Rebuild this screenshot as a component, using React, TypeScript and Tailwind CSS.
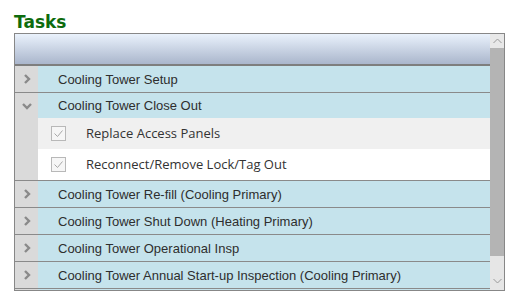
import React from "react"

const groups = [
  { name: "Cooling Tower Setup", open: false },
  { name: "Cooling Tower Close Out", open: true, items: ["Replace Access Panels", "Reconnect/Remove Lock/Tag Out"] },
  { name: "Cooling Tower Re-fill (Cooling Primary)", open: false },
  { name: "Cooling Tower Shut Down (Heating Primary)", open: false },
  { name: "Cooling Tower Operational Insp", open: false },
  { name: "Cooling Tower Annual Start-up Inspection (Cooling Primary)", open: false },
]

function Chevron({ open }: { open: boolean }) {
  return (
    <svg width="12" height="12" viewBox="0 0 12 12" className="block">
      {open ? (
        <polyline points="2,4 6,8 10,4" fill="none" stroke="#8a8a8a" strokeWidth="2.4" />
      ) : (
        <polyline points="4,2 8,6 4,10" fill="none" stroke="#8a8a8a" strokeWidth="2.4" />
      )}
    </svg>
  )
}

function Check() {
  return (
    <div className="w-[15px] h-[15px] border border-[#b8b8b8] bg-[#f6f6f6] flex items-center justify-center">
      <svg width="11" height="11" viewBox="0 0 11 11">
        <polyline points="1.5,5.5 4.5,8.5 9.5,2.5" fill="none" stroke="#a8a8a8" strokeWidth="1" />
      </svg>
    </div>
  )
}

export default function App() {
  return (
    <div className="w-[518px] h-[308px] bg-white pl-[14px] pt-[12px]">
      <h2 className="text-[17px] leading-[21px] font-bold text-[#0d6b0d] font-['DejaVu_Sans',sans-serif]">Tasks</h2>
      <div className="flex w-[491px] h-[258px] border border-[#878787] overflow-hidden">
        <div className="flex-1 flex flex-col overflow-hidden">
          {/* grid header */}
          <div className="h-[32px] shrink-0 border-b-2 border-[#7e7e7e] bg-gradient-to-b from-[#eaf2fc] to-[#aab6cc]"></div>

          {groups.map((g, i) => (
            <div key={i} className="shrink-0">
              <div
                className={`flex ${g.open ? "h-[25px]" : "h-[27px] border-b border-[#8a8a8a]"} bg-[#c5e3ec] text-[13px] text-[#2e2e2e] font-['Liberation_Sans',sans-serif]`}
              >
                <div className="w-[23px] shrink-0 bg-[#dadada] flex items-center justify-center">
                  <Chevron open={g.open} />
                </div>
                <div className="flex items-center pl-[20px] pt-px">{g.name}</div>
              </div>
              {g.items &&
                g.items.map((t, j) => (
                  <div
                    key={j}
                    className={`flex ${j === g.items!.length - 1 ? "h-[32px] border-b border-[#8a8a8a]" : "h-[31px]"} text-[13px] text-[#333333] font-['Open_Sans',sans-serif]`}
                  >
                    <div className="w-[23px] shrink-0 bg-[#dadada]"></div>
                    <div className={`flex-1 flex items-center pl-[13px] ${j % 2 === 0 ? "bg-[#f0f0f0]" : "bg-white"}`}>
                      <Check />
                      <span className="ml-[20px]">{t}</span>
                    </div>
                  </div>
                ))}
            </div>
          ))}
          {/* next row, cut off by the scroll area */}
          <div className="flex-1 flex">
            <div className="w-[23px] shrink-0 bg-[#dadada]"></div>
            <div className="flex-1 bg-[#c5e3ec]"></div>
          </div>
        </div>

        {/* scrollbar */}
        <div className="w-[14px] shrink-0 flex flex-col bg-[#e6e6e6]">
          <div className="h-[14px] flex items-center justify-center bg-[#e8e8e8]">
            <svg width="9" height="6" viewBox="0 0 9 6">
              <polyline points="0.5,5 4.5,1 8.5,5" fill="none" stroke="#9a9a9a" strokeWidth="1" />
            </svg>
          </div>
          <div className="h-[208px] bg-[#b4b4b4]"></div>
          <div className="flex-1 flex items-end justify-center pb-[6px]">
            <svg width="9" height="6" viewBox="0 0 9 6">
              <polyline points="0.5,1 4.5,5 8.5,1" fill="none" stroke="#9a9a9a" strokeWidth="1" />
            </svg>
          </div>
        </div>
      </div>
    </div>
  )
}
